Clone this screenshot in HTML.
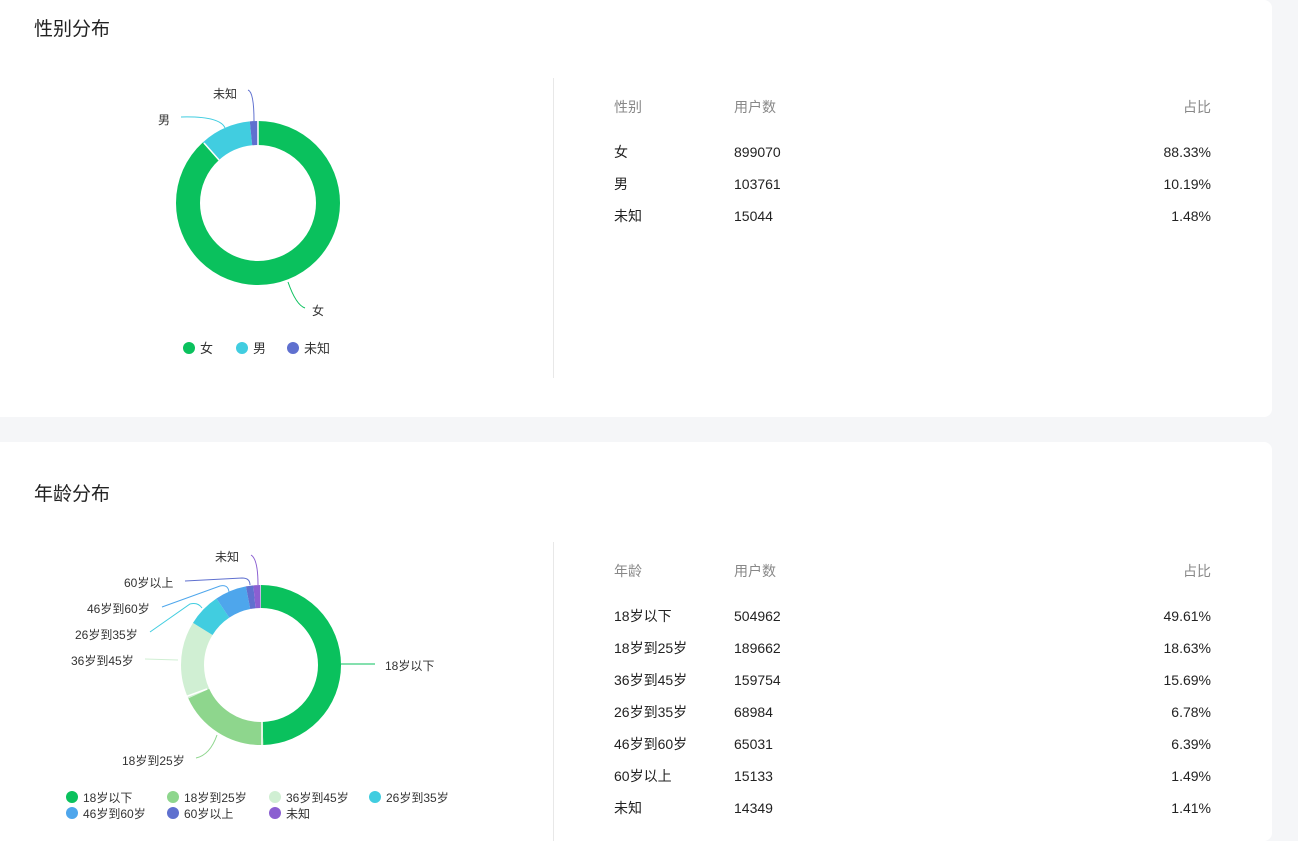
<!DOCTYPE html>
<html><head><meta charset="utf-8"><style>
html,body{margin:0;height:841px;overflow:hidden}
body{background:#f5f6f8;width:1298px;font-family:"Liberation Sans","Noto Sans CJK SC",sans-serif;color:#222;position:relative}
.card{position:absolute;left:0;width:1272px;background:#fff;border-radius:0 8px 8px 0}
.t{position:absolute;font-size:19px;color:#222}
.div{position:absolute;left:553px;width:1px;background:#e8e8e8}
.tx{position:absolute;font-size:14px;line-height:16px;white-space:nowrap}
.h{color:#888}
.r{text-align:right;width:120px}
svg text{font-family:"Liberation Sans","Noto Sans CJK SC",sans-serif;fill:#333}
</style></head><body>
<div class="card" style="top:0;height:417px">
<div class="t" style="left:34px;top:14px">性别分布</div>
<div class="div" style="top:78px;height:300px"></div>
<svg width="553" height="417" style="position:absolute;left:0;top:0">
<g transform="rotate(-90 258 203)" fill="none" stroke-width="24">
<circle cx="258" cy="203" r="70" pathLength="100" stroke="#0ac15d" stroke-dasharray="88.33 100" stroke-dashoffset="0"/>
<circle cx="258" cy="203" r="70" pathLength="100" stroke="#41cde0" stroke-dasharray="10.19 100" stroke-dashoffset="-88.33"/>
<circle cx="258" cy="203" r="70" pathLength="100" stroke="#5f70cf" stroke-dasharray="1.48 100" stroke-dashoffset="-98.52"/>
</g>
<line x1="258" y1="120" x2="258" y2="146" stroke="#fff" stroke-width="1.5"/>
<line x1="204" y1="143" x2="219" y2="160" stroke="#fff" stroke-width="1.5"/>
<path d="M288 282 Q296 305 305 308" stroke="#0ac15d" fill="none"/>
<path d="M181 117 Q220 116 225 128" stroke="#41cde0" fill="none"/>
<path d="M248 90 Q254 92 254 121" stroke="#5f70cf" fill="none"/>
<text x="312" y="315" font-size="12">女</text>
<text x="158" y="124" font-size="12">男</text>
<text x="213" y="98" font-size="12">未知</text>
<circle cx="189" cy="348" r="6" fill="#0ac15d"/><text x="200" y="353" font-size="13">女</text>
<circle cx="242" cy="348" r="6" fill="#41cde0"/><text x="253" y="353" font-size="13">男</text>
<circle cx="293" cy="348" r="6" fill="#5f70cf"/><text x="304" y="353" font-size="13">未知</text>
</svg>
<div class="tx h" style="left:614px;top:99px">性别</div><div class="tx h" style="left:734px;top:99px">用户数</div><div class="tx h r" style="left:1091px;top:99px">占比</div>
<div class="tx" style="left:614px;top:144px">女</div><div class="tx" style="left:734px;top:144px">899070</div><div class="tx r" style="left:1091px;top:144px">88.33%</div>
<div class="tx" style="left:614px;top:176px">男</div><div class="tx" style="left:734px;top:176px">103761</div><div class="tx r" style="left:1091px;top:176px">10.19%</div>
<div class="tx" style="left:614px;top:208px">未知</div><div class="tx" style="left:734px;top:208px">15044</div><div class="tx r" style="left:1091px;top:208px">1.48%</div>
</div>
<div class="card" style="top:442px;height:399px">
<div class="t" style="left:34px;top:37px">年龄分布</div>
<div class="div" style="top:100px;height:299px"></div>
<svg width="553" height="399" style="position:absolute;left:0;top:0">
<g transform="translate(0,-442)">
<g transform="rotate(-90 261 665)" fill="none" stroke-width="23">
<circle cx="261" cy="665" r="68.5" pathLength="100" stroke="#0ac15d" stroke-dasharray="49.61 100" stroke-dashoffset="0"/>
<circle cx="261" cy="665" r="68.5" pathLength="100" stroke="#8ed68d" stroke-dasharray="18.63 100" stroke-dashoffset="-49.61"/>
<circle cx="261" cy="665" r="68.5" pathLength="100" stroke="#d0efd3" stroke-dasharray="15.69 100" stroke-dashoffset="-68.24"/>
<circle cx="261" cy="665" r="68.5" pathLength="100" stroke="#41cde0" stroke-dasharray="6.78 100" stroke-dashoffset="-83.93"/>
<circle cx="261" cy="665" r="68.5" pathLength="100" stroke="#4ea6ec" stroke-dasharray="6.39 100" stroke-dashoffset="-90.71"/>
<circle cx="261" cy="665" r="68.5" pathLength="100" stroke="#5f70cf" stroke-dasharray="1.49 100" stroke-dashoffset="-97.10"/>
<circle cx="261" cy="665" r="68.5" pathLength="100" stroke="#8b5fd1" stroke-dasharray="1.41 100" stroke-dashoffset="-98.59"/>
</g>
<line x1="262" y1="722" x2="262" y2="746" stroke="#fff" stroke-width="1.5"/>
<line x1="185" y1="697" x2="207" y2="689" stroke="#fff" stroke-width="1.5"/>
<path d="M341 664 L375 664" stroke="#0ac15d" fill="none"/>
<path d="M217 735 Q210 755 196 758" stroke="#8ed68d" fill="none"/>
<path d="M178 660 L145 659" stroke="#d0efd3" fill="none"/>
<path d="M202 608 Q198 602 190 604 L150 632" stroke="#41cde0" fill="none"/>
<path d="M229 592 Q228 584 220 586 L162 607" stroke="#4ea6ec" fill="none"/>
<path d="M250 585 Q250 578 242 578 L185 581" stroke="#5f70cf" fill="none"/>
<path d="M258 585 Q258 559 251 555" stroke="#8b5fd1" fill="none"/>
<text x="385" y="670" font-size="12">18岁以下</text>
<text x="122" y="765" font-size="12">18岁到25岁</text>
<text x="71" y="665" font-size="12">36岁到45岁</text>
<text x="75" y="639" font-size="12">26岁到35岁</text>
<text x="87" y="613" font-size="12">46岁到60岁</text>
<text x="124" y="587" font-size="12">60岁以上</text>
<text x="215" y="561" font-size="12">未知</text>
<g font-size="12">
<circle cx="72" cy="797" r="6" fill="#0ac15d"/><text x="83" y="802">18岁以下</text>
<circle cx="173" cy="797" r="6" fill="#8ed68d"/><text x="184" y="802">18岁到25岁</text>
<circle cx="275" cy="797" r="6" fill="#d0efd3"/><text x="286" y="802">36岁到45岁</text>
<circle cx="375" cy="797" r="6" fill="#41cde0"/><text x="386" y="802">26岁到35岁</text>
<circle cx="72" cy="813" r="6" fill="#4ea6ec"/><text x="83" y="818">46岁到60岁</text>
<circle cx="173" cy="813" r="6" fill="#5f70cf"/><text x="184" y="818">60岁以上</text>
<circle cx="275" cy="813" r="6" fill="#8b5fd1"/><text x="286" y="818">未知</text>
</g>
</g>
</svg>
<div class="tx h" style="left:614px;top:121px">年龄</div><div class="tx h" style="left:734px;top:121px">用户数</div><div class="tx h r" style="left:1091px;top:121px">占比</div>
<div class="tx" style="left:614px;top:166px">18岁以下</div><div class="tx" style="left:734px;top:166px">504962</div><div class="tx r" style="left:1091px;top:166px">49.61%</div>
<div class="tx" style="left:614px;top:198px">18岁到25岁</div><div class="tx" style="left:734px;top:198px">189662</div><div class="tx r" style="left:1091px;top:198px">18.63%</div>
<div class="tx" style="left:614px;top:230px">36岁到45岁</div><div class="tx" style="left:734px;top:230px">159754</div><div class="tx r" style="left:1091px;top:230px">15.69%</div>
<div class="tx" style="left:614px;top:262px">26岁到35岁</div><div class="tx" style="left:734px;top:262px">68984</div><div class="tx r" style="left:1091px;top:262px">6.78%</div>
<div class="tx" style="left:614px;top:294px">46岁到60岁</div><div class="tx" style="left:734px;top:294px">65031</div><div class="tx r" style="left:1091px;top:294px">6.39%</div>
<div class="tx" style="left:614px;top:326px">60岁以上</div><div class="tx" style="left:734px;top:326px">15133</div><div class="tx r" style="left:1091px;top:326px">1.49%</div>
<div class="tx" style="left:614px;top:358px">未知</div><div class="tx" style="left:734px;top:358px">14349</div><div class="tx r" style="left:1091px;top:358px">1.41%</div>
</div>
</body></html>
